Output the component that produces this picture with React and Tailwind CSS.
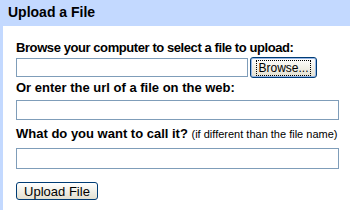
export default function App() {
  return (
    <div className="w-[350px] h-[210px] bg-white overflow-hidden" style={{ fontFamily: '"Liberation Sans", Arial, sans-serif' }}>
      <div className="h-[26px] bg-[#c3d9ff] pl-[8px] pt-[4px]">
        <h1 className="text-[14px] leading-[17px] font-bold text-black">Upload a File</h1>
      </div>
      <div className="border-l-[3px] border-[#c3d9ff] h-[184px] pl-[13px] pt-[14px]">
        <label className="block text-[13px] leading-[15px] font-bold tracking-[-0.42px] text-black">
          Browse your computer to select a file to upload:
        </label>
        <div className="flex items-center gap-[2px] mt-[2px]">
          <input type="text" className="w-[232px] h-[19px] border border-[#7f9db9] bg-white outline-none" />
          <button type="button" className="h-[21px] w-[67px] rounded-[3px] border border-[#003c74] bg-gradient-to-b from-white to-[#e3e0d0] text-[12px] leading-[14px] text-black shadow-[inset_0_0_0_1px_#98b8e8]">
            <span className="border border-dotted border-black px-[1px]">Browse...</span>
          </button>
        </div>
        <label className="block mt-[2px] text-[13px] leading-[15px] font-bold text-black">
          Or enter the url of a file on the web:
        </label>
        <input type="text" className="block mt-[5px] w-[323px] h-[20px] border border-[#7f9db9] bg-white outline-none" />
        <label className="block mt-[6px] text-[13px] leading-[15px] text-black">
          <span className="font-bold">What do you want to call it?</span>{' '}
          <span className="text-[11px]">(if different than the file name)</span>
        </label>
        <input type="text" className="block mt-[6px] w-[323px] h-[21px] border border-[#7f9db9] bg-white outline-none" />
        <button type="button" className="block mt-[13px] h-[18px] w-[82px] rounded-[3px] border border-[#003c74] bg-gradient-to-b from-white to-[#e3e0d0] text-[13px] leading-[15px] text-black">
          Upload File
        </button>
      </div>
    </div>
  );
}
